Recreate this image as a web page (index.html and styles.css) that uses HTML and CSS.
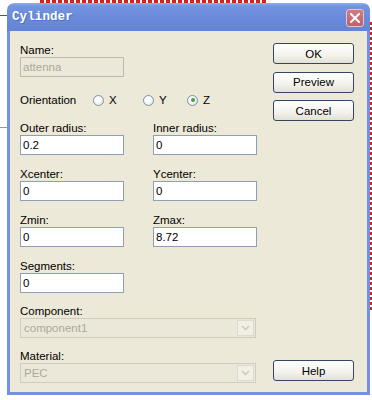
FILE: index.html
```html
<!DOCTYPE html>
<html lang="en">
<head>
    <meta charset="UTF-8">
    <meta name="viewport" content="width=device-width, initial-scale=1.0">
    <title>Cylinder</title>
    <link rel="stylesheet" href="styles.css">
</head>
<body>

    <div class="scene">
        <!-- bits of the drawing behind the dialog -->
        <div class="wire wire-top"></div>
        <div class="wire wire-right"></div>
        <div class="line line-a"></div>
        <div class="line line-b"></div>

        <div class="window">
            <div class="titlebar">
                <span class="title">Cylinder</span>
                <span class="close">
                    <svg width="10" height="10" viewBox="0 0 10 10">
                        <path d="M1 1 L9 9 M9 1 L1 9" stroke="#fff" stroke-width="2" stroke-linecap="square"/>
                    </svg>
                </span>
            </div>

            <div class="client">
                <div class="form">
                    <div class="field">
                        <label>Name:</label>
                        <input class="text" type="text" value="attenna" disabled>
                    </div>

                    <div class="orient">
                        <span class="orient-label">Orientation</span>
                        <span class="radio radio-x"><span class="dot"></span>X</span>
                        <span class="radio radio-y"><span class="dot"></span>Y</span>
                        <span class="radio"><span class="dot checked"></span>Z</span>
                    </div>

                    <div class="pair first">
                        <div class="field">
                            <label>Outer radius:</label>
                            <input class="text" type="text" value="0.2">
                        </div>
                        <div class="field">
                            <label>Inner radius:</label>
                            <input class="text" type="text" value="0">
                        </div>
                    </div>

                    <div class="pair">
                        <div class="field">
                            <label>Xcenter:</label>
                            <input class="text" type="text" value="0">
                        </div>
                        <div class="field">
                            <label>Ycenter:</label>
                            <input class="text" type="text" value="0">
                        </div>
                    </div>

                    <div class="pair">
                        <div class="field">
                            <label>Zmin:</label>
                            <input class="text" type="text" value="0">
                        </div>
                        <div class="field">
                            <label>Zmax:</label>
                            <input class="text" type="text" value="8.72">
                        </div>
                    </div>

                    <div class="pair">
                        <div class="field">
                            <label>Segments:</label>
                            <input class="text" type="text" value="0">
                        </div>
                    </div>

                    <div class="field combo-field">
                        <label>Component:</label>
                        <div class="combo">
                            <span class="combo-text">component1</span>
                            <span class="combo-btn">
                                <svg width="9" height="6" viewBox="0 0 9 6">
                                    <path d="M1 1 L4.5 4.5 L8 1" fill="none" stroke="#c9c7bd" stroke-width="1.5"/>
                                </svg>
                            </span>
                        </div>
                    </div>

                    <div class="field combo-field">
                        <label>Material:</label>
                        <div class="combo">
                            <span class="combo-text">PEC</span>
                            <span class="combo-btn">
                                <svg width="9" height="6" viewBox="0 0 9 6">
                                    <path d="M1 1 L4.5 4.5 L8 1" fill="none" stroke="#c9c7bd" stroke-width="1.5"/>
                                </svg>
                            </span>
                        </div>
                    </div>
                </div>

                <div class="buttons">
                    <button>OK</button>
                    <button>Preview</button>
                    <button>Cancel</button>
                    <button class="help">Help</button>
                </div>
            </div>
        </div>
    </div>

</body>
</html>
```

FILE: styles.css
```css
body {
    margin: 0;
    background: #fff;
    font-family: "Liberation Sans", Arial, sans-serif;
    font-size: 11.5px;
    color: #000;
}

.scene {
    position: relative;
    width: 372px;
    height: 400px;
    overflow: hidden;
    padding-top: 3px;
    box-sizing: border-box;
}

/* background drawing */
.wire {
    position: absolute;
}

.wire-top {
    left: 40px;
    top: 0;
    width: 226px;
    height: 3px;
    background: repeating-linear-gradient(90deg, #d0202a 0 4px, #fff 4px 6px);
}

.wire-right {
    left: 370px;
    top: 22px;
    width: 2px;
    height: 290px;
    background: repeating-linear-gradient(180deg, #d0202a 0 3px, #fff 3px 5px);
}

.line {
    position: absolute;
    left: 0;
    width: 7px;
    height: 1px;
    background: #555;
}

.line-a { top: 15px; }
.line-b { top: 127px; background: #8a9ab8; }

/* dialog */
.window {
    position: relative;
    margin-left: 7px;
    width: 363px;
}

.titlebar {
    display: flex;
    align-items: center;
    height: 28px;
    padding: 0 6px 0 5px;
    border-radius: 7px 7px 0 0;
    background: linear-gradient(#93adee 0, #7294e0 3px, #6a8bdb 50%, #6485d6 100%);
}

.title {
    font-family: "Liberation Mono", "Courier New", monospace;
    font-weight: bold;
    font-size: 12.5px;
    color: #fff;
    text-shadow: 1px 1px 0 #5271bd;
    letter-spacing: 0.1px;
}

.close {
    display: flex;
    align-items: center;
    justify-content: center;
    margin-left: auto;
    width: 18px;
    height: 18px;
    margin-top: 1px;
    box-sizing: border-box;
    border: 1px solid #e6c3c8;
    border-radius: 3px;
    background: linear-gradient(#d27b84, #c0606b);
}

.client {
    display: flex;
    height: 364px;
    box-sizing: border-box;
    padding: 12px 13px 11px 10px;
    border: 3px solid #7391de;
    border-top: 0;
    background: #ece9d8;
}

.form {
    width: 237px;
    padding-top: 1px;
}

.field label {
    display: block;
    height: 13px;
    line-height: 13px;
}

.text {
    display: block;
    width: 104px;
    height: 20px;
    box-sizing: border-box;
    margin: 0;
    padding: 0 2px;
    border: 1px solid #8e9fb5;
    background: #fff;
    font-family: inherit;
    font-size: 11.5px;
    color: #000;
}

.text:disabled {
    border-color: #bdbbae;
    background: #ebe8d9;
    color: #aca899;
}

.orient {
    display: flex;
    align-items: center;
    height: 20px;
    margin-top: 13px;
}

.orient-label {
    width: 73px;
}

.radio {
    display: flex;
    align-items: center;
}

.radio-x { width: 50px; }
.radio-y { width: 44px; }

.dot {
    width: 9px;
    height: 9px;
    margin-right: 5px;
    border: 1px solid #7b93ab;
    border-radius: 50%;
    background: radial-gradient(circle at 40% 40%, #fff 30%, #dedcd2 100%);
    position: relative;
}

.dot.checked::after {
    content: "";
    position: absolute;
    left: 2.5px;
    top: 2.5px;
    width: 4px;
    height: 4px;
    border-radius: 50%;
    background: #3aa63a;
}

.pair {
    display: flex;
    gap: 29px;
    margin-top: 13px;
}

.pair.first {
    margin-top: 12px;
}

.combo-field {
    margin-top: 12px;
}

.combo {
    display: flex;
    width: 236px;
    height: 20px;
    box-sizing: border-box;
    border: 1px solid #cfcdc1;
    background: #ebe8da;
    color: #aca899;
}

.combo-text {
    flex: 1;
    line-height: 18px;
    padding-left: 3px;
}

.combo-btn {
    display: flex;
    align-items: center;
    justify-content: center;
    width: 15px;
    margin: 1px;
    border: 1px solid #dcdad0;
    background: #f1efe6;
}

.buttons {
    display: flex;
    flex-direction: column;
    gap: 7.5px;
    margin-left: auto;
    width: 81px;
}

button {
    height: 21px;
    padding: 0;
    border: 1px solid #33485e;
    border-radius: 3px;
    background: linear-gradient(#ffffff, #f3f2ec 60%, #e3e0d3);
    font-family: inherit;
    font-size: 11.5px;
    color: #000;
}

.help {
    margin-top: auto;
}
```
